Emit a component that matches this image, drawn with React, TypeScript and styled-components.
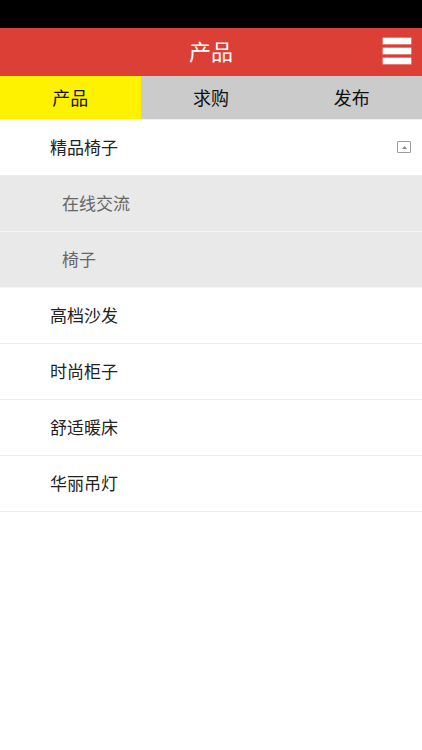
import React from "react";
import styled, { createGlobalStyle } from "styled-components";

const Global = createGlobalStyle`
  html, body { margin: 0; padding: 0; background: #fff; }
  body { font-family: "Noto Sans CJK SC", "Noto Sans", sans-serif; }
`;

const Page = styled.div`
  width: 422px;
  min-height: 750px;
  background: #fff;
  display: flex;
  flex-direction: column;
`;

const StatusBar = styled.div`
  height: 28px;
  background: #000;
`;

const Header = styled.header`
  height: 48px;
  background: #dc3f36;
  display: flex;
  align-items: center;
  justify-content: center;
  position: relative;
`;

const Title = styled.h1`
  margin: 0 0 4px;
  color: #fff;
  font-size: 22px;
  font-weight: 400;
  line-height: 1;
`;

const MenuButton = styled.div`
  position: absolute;
  right: 11px;
  top: 10px;
  width: 28px;
  display: flex;
  flex-direction: column;
  gap: 4px;
`;

const Bar = styled.span`
  display: block;
  height: 6px;
  background: #fff;
  box-shadow: 0 0 0 0.5px rgba(255, 220, 220, 0.8);
`;

const Tabs = styled.nav`
  display: grid;
  grid-template-columns: repeat(3, 1fr);
  height: 43px;
  background: #cbcbcb;
  border-bottom: 1px solid #eeeeee;
`;

const Tab = styled.div<{ $active?: boolean }>`
  display: flex;
  align-items: center;
  justify-content: center;
  background: ${(p) => (p.$active ? "#fff200" : "transparent")};
  color: #111;
  font-size: 18px;
  padding-bottom: 1px;
`;

const List = styled.ul`
  list-style: none;
  margin: 0;
  padding: 0;
`;

const Row = styled.li<{ $sub?: boolean }>`
  box-sizing: border-box;
  height: 56px;
  border-bottom: 1px solid ${(p) => (p.$sub ? "#f5f5f5" : "#ececec")};
  background: ${(p) => (p.$sub ? "#e9e9e9" : "#fff")};
  display: flex;
  align-items: center;
  padding: 0 11px 3px ${(p) => (p.$sub ? "62px" : "50px")};
  color: ${(p) => (p.$sub ? "#666" : "#222")};
  font-size: 17px;
`;

const Label = styled.span`
  flex: 1;
`;

const Toggle = styled.span`
  width: 12px;
  height: 10px;
  border: 1px solid #9a9a9a;
  border-radius: 1px;
  display: flex;
  align-items: center;
  justify-content: center;
  margin-top: 2px;
`;

const main = ["高档沙发", "时尚柜子", "舒适暖床", "华丽吊灯"];

export default function App() {
  return (
    <Page>
      <Global />
      <StatusBar />
      <Header>
        <Title>产品</Title>
        <MenuButton>
          <Bar />
          <Bar />
          <Bar />
        </MenuButton>
      </Header>
      <Tabs>
        <Tab $active>产品</Tab>
        <Tab>求购</Tab>
        <Tab>发布</Tab>
      </Tabs>
      <List>
        <Row>
          <Label>精品椅子</Label>
          <Toggle>
            <svg width="5" height="3" viewBox="0 0 5 3">
              <polygon points="2.5,0 5,3 0,3" fill="#888" />
            </svg>
          </Toggle>
        </Row>
        <Row $sub>在线交流</Row>
        <Row $sub>椅子</Row>
        {main.map((m) => (
          <Row key={m}>{m}</Row>
        ))}
      </List>
    </Page>
  );
}
